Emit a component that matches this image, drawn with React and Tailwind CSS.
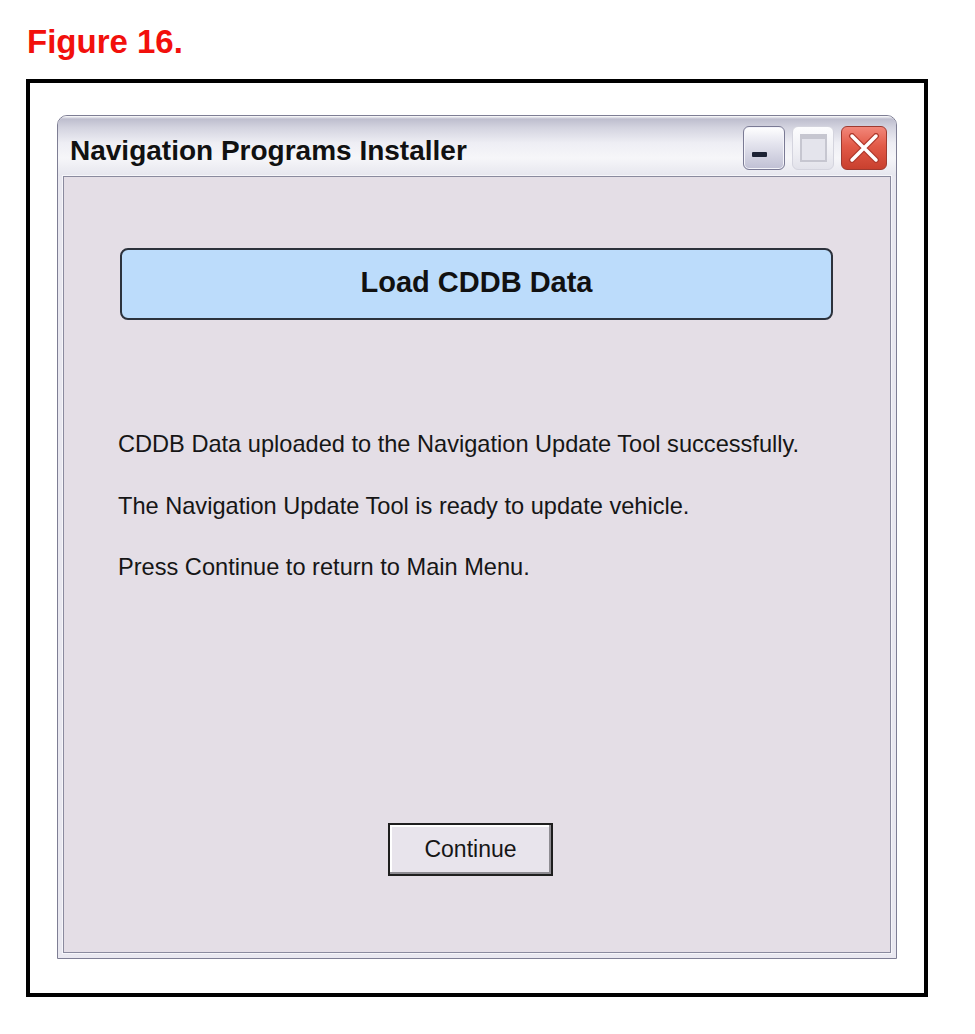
import React from 'react';

const sans = { fontFamily: '"Liberation Sans", Arial, sans-serif' };

function MinimizeButton() {
  return (
    <div className="relative w-[42px] h-[44px] rounded-[6px] border border-[#7a7a94] bg-[linear-gradient(to_bottom,#ffffff_0%,#e4e4ee_40%,#c0c0d4_100%)] shadow-[inset_0_0_0_1px_#f4f4fa]">
      <div className="absolute left-[8px] bottom-[12px] w-[15px] h-[5px] bg-[#1c2234] rounded-[1px]" />
    </div>
  );
}

function MaximizeButton() {
  return (
    <div className="relative w-[42px] h-[44px] rounded-[6px] border border-[#d4d4de] bg-[linear-gradient(to_bottom,#fcfcfe_0%,#efeff4_60%,#e2e2ea_100%)] flex items-center justify-center">
      <div className="w-[27px] h-[28px] border-2 border-[#c6c6d0] border-t-[5px] bg-[#e4e4ec]" />
    </div>
  );
}

function CloseButton() {
  return (
    <div className="w-[46px] h-[44px] rounded-[6px] border border-[#9e3a30] bg-[linear-gradient(to_bottom,#f2877a_0%,#e25a48_45%,#c9402e_100%)] flex items-center justify-center">
      <svg width="32" height="30" viewBox="0 0 32 30">
        <path d="M4 3 L28 27 M28 3 L4 27" stroke="#b0392c" strokeWidth="6" strokeLinecap="round" />
        <path d="M4 3 L28 27 M28 3 L4 27" stroke="#ffffff" strokeWidth="3.5" strokeLinecap="round" />
      </svg>
    </div>
  );
}

export default function App() {
  return (
    <div className="w-[975px] h-[1034px] bg-white pt-[25px]" style={sans}>
      {/* Figure caption */}
      <div className="pl-[27px] h-[32px] text-[33px] leading-none font-bold text-[#f2100c]">
        Figure 16.
      </div>

      {/* Black frame */}
      <div className="ml-[26px] mt-[22px] w-[902px] h-[918px] border-4 border-black pl-[27px] pt-[32px]">
        {/* Window */}
        <div className="w-[840px] h-[844px] flex flex-col border border-[#7e7e94] rounded-t-[10px] bg-[#e9e8f0] overflow-hidden">
          {/* Title bar */}
          <div className="h-[60px] flex items-start justify-between pl-[12px] pr-[9px] bg-[linear-gradient(to_bottom,#ffffff_0%,#bebece_5%,#d4d4e0_20%,#eeeef4_45%,#f6f6f9_70%,#e6e6ee_100%)]">
            <div className="pt-[21px] text-[28px] leading-none font-bold text-[#111]">
              Navigation Programs Installer
            </div>
            <div className="flex gap-[7px] pt-[10px]">
              <MinimizeButton />
              <MaximizeButton />
              <CloseButton />
            </div>
          </div>

          {/* Body */}
          <div className="flex-1 px-[5px] pb-[5px] flex">
            <div className="flex-1 flex flex-col border border-[#8a8a9e] bg-[#e4dee6] shadow-[0_0_0_1px_#f6f6fa]">
              <div className="mt-[71px] ml-[56px] mr-[57px] h-[72px] rounded-[8px] border-2 border-[#2c323c] bg-[#bcdcfb] flex items-center justify-center pb-[3px]">
                <span className="text-[29px] leading-none font-bold text-[#111]">Load CDDB Data</span>
              </div>

              <div className="mt-[113px] ml-[54px] flex flex-col gap-[38px] text-[23.6px] leading-none text-[#161616]">
                <p>CDDB Data uploaded to the Navigation Update Tool successfully.</p>
                <p>The Navigation Update Tool is ready to update vehicle.</p>
                <p>Press Continue to return to Main Menu.</p>
              </div>

              <button className="mt-auto mb-[76px] ml-[324px] w-[165px] h-[53px] border-2 border-[#1e1e1e] bg-[#e8e4ec] shadow-[inset_-2px_-2px_0_#8e8c92,inset_2px_2px_0_#ffffff] flex items-center justify-center text-[23px] leading-none text-[#161616]">
                Continue
              </button>
            </div>
          </div>
        </div>
      </div>
    </div>
  );
}
